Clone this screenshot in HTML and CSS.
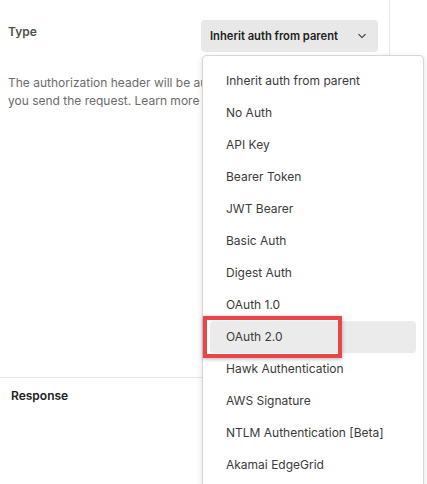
FILE: index.html
```html
<!DOCTYPE html>
<html>
<head>
<meta charset="utf-8">
<link rel="stylesheet" href="styles.css">
</head>
<body>
<div class="page">
  <div class="main">
    <div class="auth">
      <div class="type-row">
        <div class="label">Type</div>
        <div class="select-wrap">
          <button class="select">
            <span>Inherit auth from parent</span>
            <svg class="chev" width="10" height="6" viewBox="0 0 10 6"><path d="M1.5 1.2 L5 4.6 L8.5 1.2" fill="none" stroke="#333" stroke-width="1.1"/></svg>
          </button>
          <div class="menu">
            <div class="item">Inherit auth from parent</div>
            <div class="item">No Auth</div>
            <div class="item">API Key</div>
            <div class="item">Bearer Token</div>
            <div class="item">JWT Bearer</div>
            <div class="item">Basic Auth</div>
            <div class="item">Digest Auth</div>
            <div class="item">OAuth 1.0</div>
            <div class="item active"><span class="mark"></span>OAuth 2.0</div>
            <div class="item">Hawk Authentication</div>
            <div class="item">AWS Signature</div>
            <div class="item">NTLM Authentication [Beta]</div>
            <div class="item">Akamai EdgeGrid</div>
          </div>
        </div>
      </div>
      <p class="desc">The authorization header will be automatically generated when<br>you send the request. Learn more about authorization</p>
    </div>
    <div class="response">
      <div class="resp-title">Response</div>
    </div>
  </div>
  <div class="side"></div>
</div>
</body>
</html>
```
FILE: styles.css
```css
html, body {
  margin: 0;
  padding: 0;
  background: #fff;
  font-family: Inter, "Noto Sans", sans-serif;
  font-size: 12px;
  overflow: hidden;
}
.page {
  display: flex;
  width: 427px;
  height: 484px;
  overflow: hidden;
}
.main {
  width: 390px;
  display: flex;
  flex-direction: column;
  border-right: 1px solid #e6e6e6;
  box-sizing: border-box;
}
.auth {
  height: 378px;
  border-bottom: 1px solid #e6e6e6;
  box-sizing: border-box;
  padding: 20px 0 0 8px;
}
.type-row {
  display: flex;
  justify-content: space-between;
  padding-right: 11px;
}
.label {
  font-weight: 600;
  color: #505050;
  padding-top: 4px;
}
.select-wrap {
  position: relative;
}
.select {
  display: flex;
  align-items: center;
  width: 177px;
  height: 32px;
  border: none;
  border-radius: 4px;
  background: #e8e8e8;
  font-family: inherit;
  font-size: 11.2px;
  font-weight: 600;
  color: #212121;
  padding: 0 0 0 9px;
  margin: 0;
}
.select span { flex: 1; text-align: left; }
.chev { margin-right: 11px; }
.desc {
  margin: 22px 0 0 0;
  color: #6b6b6b;
  line-height: 18px;
  white-space: nowrap;
}
.resp-title {
  font-weight: 600;
  color: #212121;
  padding: 10px 0 0 11px;
}
.menu {
  position: absolute;
  top: 35px;
  left: 1px;
  width: 222px;
  height: 440px;
  background: #fff;
  border: 1px solid #d6d6d6;
  border-radius: 4px;
  box-shadow: 0 2px 6px rgba(0,0,0,0.12);
  box-sizing: border-box;
  padding: 9px 7px 0 7px;
  z-index: 5;
}
.item {
  position: relative;
  height: 32px;
  line-height: 32px;
  padding-left: 16px;
  color: #3a3a3a;
  font-size: 12px;
  border-radius: 4px;
}
.item.active {
  background: #ebebeb;
}
.mark {
  position: absolute;
  left: -7px;
  top: -5px;
  width: 139px;
  height: 42px;
  border: 4px solid #e8464b;
  box-sizing: border-box;
  box-shadow: 0 1px 4px rgba(0,0,0,0.3);
}
.side {
  flex: 1;
}
```
